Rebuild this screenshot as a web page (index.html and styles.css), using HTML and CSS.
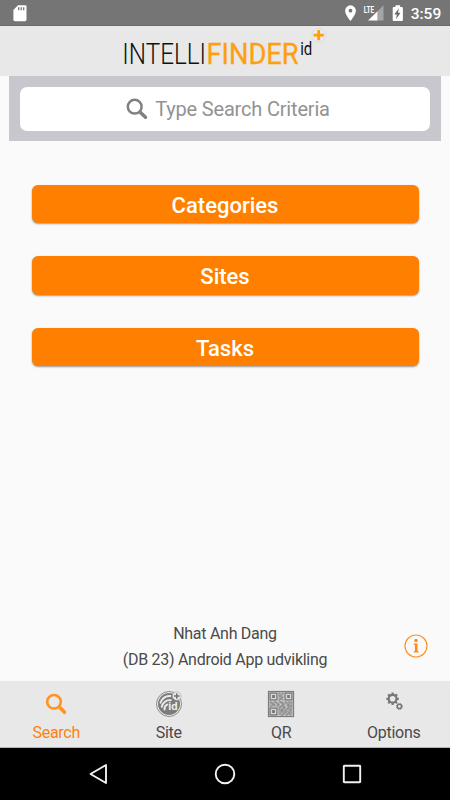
FILE: index.html
```
<!DOCTYPE html>
<html lang="en">

<head>
   <meta charset="UTF-8">
   <meta name="viewport" content="width=device-width, initial-scale=1.0">
   <title>Intellifinder id</title>
   <link rel="stylesheet" href="styles.css">
</head>

<body>
   <!-- Status bar -->
   <div class="status-bar">
      <svg class="sd-card" width="14" height="17" viewBox="0 0 14 17">
         <path fill="#fff" d="M5 .3h7.200a1.300 1.300 0 0 1 1.300 1.300v13a1.600 1.600 0 0 1-1.600 1.600H2a1.600 1.600 0 0 1-1.600-1.600V5z"/>
         <path stroke="#757575" stroke-width="1.300" d="M5.700 2.200v3M8.200 2.200v3M10.700 2.200v3"/>
      </svg>
      <svg width="106" height="26" viewBox="0 0 106 26">
         <path fill="#fff" fill-rule="evenodd" d="M6.500 5.300a5.400 5.400 0 0 0-5.400 5.400c0 4 5.400 10.200 5.400 10.200s5.400-6.200 5.400-10.200a5.400 5.400 0 0 0-5.400-5.400zm0 3.500a1.900 1.900 0 1 1 0 3.800 1.900 1.900 0 0 1 0-3.800z"/>
         <path fill="#a5a5a5" d="M39.500 5.300v15.300h-6V11.300z"/>
         <path fill="#fff" d="M24 20.600 33.500 11.300v9.300z"/>
         <text class="lte" x="19.800" y="12.600" textLength="10.400" lengthAdjust="spacingAndGlyphs">LTE</text>
         <path fill="#fff" d="M51.500 5.300h4.600v1.600h1.600a1.200 1.200 0 0 1 1.200 1.200v11.600a1.200 1.200 0 0 1-1.200 1.200h-7.800a1.200 1.200 0 0 1-1.200-1.200V8.100a1.200 1.200 0 0 1 1.200-1.200h1.600z"/>
         <path fill="#6a6a6a" d="M54.900 8.300 50.300 14.600h2.600l-.9 4.600 4.500-6.500h-2.500z"/>
         <text class="clock" x="66.700" y="18.900" textLength="30.500" lengthAdjust="spacingAndGlyphs">3:59</text>
      </svg>
   </div>

   <!-- Logo -->
   <header class="header">
      <svg width="210" height="50" viewBox="120 26 210 50">
         <text class="logo-thin" transform="translate(122.300 64) scale(.85 1)" textLength="98.500" lengthAdjust="spacingAndGlyphs">INTELLI</text>
         <text class="logo-bold" transform="translate(206.400 64) scale(.9 1)" textLength="102.500" lengthAdjust="spacingAndGlyphs">FINDER</text>
         <text class="logo-id" transform="translate(300.200 55) scale(.93 1)" textLength="13" lengthAdjust="spacingAndGlyphs">id</text>
         <circle cx="318.700" cy="35.200" r="6.800" fill="#ececec" stroke="#d6d6d6" stroke-width=".7"/>
         <path d="M318.700 30.100v10.200M313.600 35.200h10.200" stroke="#ff9f0f" stroke-width="2.800"/>
      </svg>
   </header>

   <div class="search-area">
      <div class="search-box">
         <svg width="22" height="22" viewBox="0 0 22 22" fill="none" stroke="#808080">
            <circle cx="8.700" cy="8.700" r="6.900" stroke-width="2.500"/>
            <path d="m14.200 14.200 5.300 5" stroke-width="3.500" stroke-linecap="round"/>
         </svg>
         <span>Type Search Criteria</span>
      </div>
   </div>

   <main class="content">
      <button class="menu-btn">Categories</button>
      <button class="menu-btn">Sites</button>
      <button class="menu-btn">Tasks</button>
   </main>

   <footer class="user-info">
      <p>Nhat Anh Dang</p>
      <p>(DB 23) Android App udvikling</p>
      <svg class="info-icon" width="24" height="24" viewBox="0 0 24 24">
         <circle cx="12" cy="12" r="11" fill="none" stroke="#ff9426" stroke-width="1.200"/>
         <g fill="#ff8a16">
            <circle cx="12" cy="6.500" r="1.700"/>
            <path d="M9.700 9.600h3.800v7.500l1.200.3v1H9.700v-1l1.200-.3v-6.200l-1.200-.3z"/>
         </g>
      </svg>
   </footer>

   <!-- Bottom tabs -->
   <nav class="tabs">
      <a class="tab active">
         <svg width="28" height="28" viewBox="0 0 28 28" fill="none" stroke="#ff931e">
            <circle cx="12" cy="11.800" r="6.800" stroke-width="2.500"/>
            <path d="m17.500 17.300 5 5" stroke-width="3.500" stroke-linecap="round"/>
         </svg>
         <span>Search</span>
      </a>
      <a class="tab">
         <svg width="28" height="28" viewBox="0 0 28 28">
            <circle cx="14" cy="14" r="12.500" fill="#eee" stroke="#808080" stroke-width=".9"/>
            <circle cx="14" cy="14" r="11" fill="#7c7c7c"/>
            <g fill="none" stroke="#ececec" stroke-width="1.900" stroke-linecap="round">
               <path d="M5.500 12.800a9.200 9.200 0 0 1 9.800-6.800"/>
               <path d="M6.800 16.800a8 8 0 0 1 9-6.600"/>
               <path d="M9.500 19.500a5 5 0 0 1 2.800-5"/>
            </g>
            <text class="site-id" x="13.200" y="20.400" textLength="9.300" lengthAdjust="spacingAndGlyphs">id</text>
            <circle cx="21.800" cy="6" r="4.300" fill="#e9e9e9" stroke="#aaa" stroke-width=".6"/>
            <path d="M21.800 3.200v5.600M19 6h5.600" stroke="#747474" stroke-width="1.500"/>
         </svg>
         <span>Site</span>
      </a>
      <a class="tab">
         <svg width="28" height="28" viewBox="-.5 -.5 28 28">
            <rect x=".9" y=".9" width="25.200" height="25.200" fill="#c9c9c9" stroke="#747474" stroke-width="1"/>
            <g fill="#d8d8d8" stroke="#747474" stroke-width="1.200">
               <path d="M2.600 2.600h6.800v6.800H2.600zM17.600 2.600h6.800v6.800h-6.800zM2.600 17.600h6.800v6.800H2.600z"/>
            </g>
            <path fill="#777" d="M4.600 4.600h2.800v2.800H4.600zM19.600 4.600h2.800v2.800h-2.800zM4.600 19.600h2.800v2.800H4.600z"/>
            <path fill="none" stroke="#777" stroke-width="1" d="M11 2.500h2M14 2.500h2M12 3.500h1M15 3.500h1M11 4.500h1M13 4.500h2M11 5.500h3M12 6.500h1M14 6.500h2M11 7.500h1M13 7.500h2M12 8.500h3M11 9.500h2M15 9.500h1
               M2 11.500h2M6 11.500h3M11 11.500h4M17 11.500h2M20 11.500h3M24 11.500h1M3 12.500h3M8 12.500h2M13 12.500h3M18 12.500h2M22 12.500h3M2 13.500h1M5 13.500h2M9 13.500h3M15 13.500h3M20 13.500h2M4 14.500h4M10 14.500h2M14 14.500h2M19 14.500h3M23 14.500h2M2 15.500h3M7 15.500h1M9 15.500h2M13 15.500h4M20 15.500h4
               M11 16.500h3M16 16.500h2M20 16.500h1M23 16.500h2M12 17.500h1M15 17.500h3M20 17.500h3M11 18.500h2M14 18.500h2M18 18.500h3M23 18.500h2M11 19.500h1M13 19.500h3M17 19.500h1M21 19.500h3M12 20.500h3M16 20.500h4M22 20.500h2M11 21.500h1M14 21.500h2M18 21.500h1M20 21.500h2M24 21.500h1M12 22.500h2M16 22.500h3M21 22.500h3M11 23.500h2M15 23.500h2M19 23.500h3M24 23.500h1M13 24.500h3M18 24.500h2M22 24.500h2"/>
         </svg>
         <span>QR</span>
      </a>
      <a class="tab">
         <svg width="28" height="28" viewBox="0 0 28 28" fill="none" stroke="#777">
            <circle cx="12.600" cy="8.800" r="3.900" stroke-width="2.200"/>
            <path stroke-width="2.200" d="M12.600 2.600v2M12.600 13v2M6.400 8.800h2M16.800 8.800h2M8.200 4.400l1.500 1.500M15.500 11.700l1.500 1.500M8.200 13.200l1.500-1.500M15.500 5.900l1.500-1.500"/>
            <circle cx="19.400" cy="16.400" r="2.100" stroke-width="1.500"/>
            <circle cx="19.400" cy="16.400" r="3" stroke-width=".9" stroke-dasharray="1.180 1.176"/>
         </svg>
         <span>Options</span>
      </a>
   </nav>

   <!-- Android navigation -->
   <div class="android-nav">
      <svg width="20" height="22" viewBox="0 0 20 22"><path d="M17 2v18L1.500 11z"/></svg>
      <svg width="22" height="22" viewBox="0 0 22 22"><circle cx="11" cy="11" r="9.300"/></svg>
      <svg width="20" height="22" viewBox="0 0 20 22"><rect x="1.800" y="2.800" width="16.400" height="16.400" rx=".5"/></svg>
   </div>
</body>

</html>
```
FILE: styles.css
```
* {
   margin: 0;
   padding: 0;
   box-sizing: border-box;
   font-family: Roboto, 'Liberation Sans', sans-serif;
}

body {
   background: #fafafa;
   color: #4a4a4a;
   height: 100vh;
   display: flex;
   flex-direction: column;
   overflow: hidden;
}

.status-bar {
   height: 26px;
   background: #757575;
   border-bottom: 1px solid #686868;
   display: flex;
   justify-content: space-between;
   align-items: flex-start;
   padding-left: 13px;
   flex-shrink: 0;
}

.sd-card {
   margin-top: 5px;
}

.lte {
   font-size: 9.500px;
   font-weight: 700;
   fill: #fff;
}

.clock {
   font-size: 14.500px;
   font-weight: 500;
   fill: #fff;
}

.header {
   height: 50px;
   background: #e8e8e8;
   display: flex;
   justify-content: center;
   flex-shrink: 0;
}

.logo-thin {
   font-size: 30px;
   font-weight: 300;
   fill: #111;
}

.logo-bold {
   font-size: 30px;
   font-weight: 400;
   fill: #ff9f0f;
   stroke: #ff9f0f;
   stroke-width: 0.3px;
}

.logo-id {
   font-size: 17.500px;
   font-weight: 400;
   fill: #111;
}

.search-area {
   height: 65px;
   margin: 0 9px;
   padding: 10.500px 11px;
   background: #c8c7cd;
   flex-shrink: 0;
}

.search-box {
   height: 44px;
   background: #fff;
   border-radius: 7px;
   display: flex;
   align-items: center;
   justify-content: center;
   gap: 7px;
   padding-left: 6px;
   font-size: 20px;
   letter-spacing: -0.180px;
   line-height: 24px;
   color: #929292;
}

.search-box span {
   padding-top: 1px;
}

.content {
   flex: 1;
   display: flex;
   flex-direction: column;
   gap: 33px;
   padding: 43.500px 31.500px 0;
}

.menu-btn {
   height: 38.500px;
   flex-shrink: 0;
   border: none;
   border-radius: 6px;
   background: #ff8000;
   box-shadow: 0 1px 2px rgba(0, 0, 0, 0.4);
   color: #fff;
   font-size: 22px;
   font-weight: 500;
   line-height: 38px;
   padding-top: 2px;
   cursor: pointer;
}

.user-info {
   position: relative;
   height: 60px;
   text-align: center;
   font-size: 16px;
   letter-spacing: -0.280px;
   line-height: 26px;
   flex-shrink: 0;
}

.info-icon {
   position: absolute;
   right: 22px;
   top: 13px;
}

.tabs {
   height: 67px;
   background: #e8e8e8;
   border-bottom: 1px solid #b5b5b5;
   display: flex;
   flex-shrink: 0;
}

.tab {
   flex: 1;
   display: flex;
   flex-direction: column;
   align-items: center;
   gap: 5px;
   padding-top: 9px;
   font-size: 16px;
   letter-spacing: -0.280px;
   line-height: 20px;
   color: #4a4a4a;
}

.tab.active {
   color: #ff8010;
}

.site-id {
   font-size: 10px;
   font-weight: 700;
   letter-spacing: 0;
   fill: #ececec;
}

.android-nav {
   height: 52px;
   background: #000;
   display: flex;
   justify-content: space-between;
   align-items: center;
   padding: 0 88.500px 0 89px;
   flex-shrink: 0;
}

.android-nav svg {
   fill: none;
   stroke: #f2f2f2;
   stroke-width: 1.900;
   stroke-linejoin: round;
}
```
